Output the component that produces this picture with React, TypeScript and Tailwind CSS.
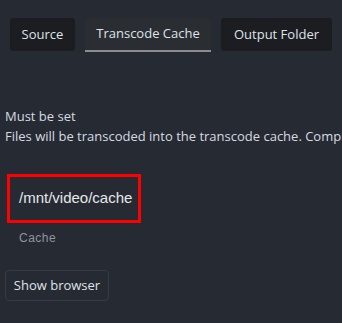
export default function App() {
  return (
    <div className="w-[342px] h-[323px] overflow-hidden bg-[#262a33] text-[#d6dae0]" style={{ fontFamily: '"Open Sans", "Noto Sans", sans-serif' }}>
      <div className="flex gap-[10px] pl-[10px] pt-[18px]">
        <button className="h-[33px] w-[65px] rounded-[3px] bg-[#1b1d21] text-[13px] text-[#dfe3e8]">Source</button>
        <button className="h-[34px] w-[126px] rounded-t-[3px] bg-[#2a2d32] text-[13px] text-[#dfe3e8] border-b-2 border-[#8a8c8e]">Transcode Cache</button>
        <button className="h-[33px] w-[111px] rounded-[3px] bg-[#1b1d21] text-[13px] text-[#dfe3e8]">Output Folder</button>
      </div>
      <div className="pl-[5px] pt-[54px] text-[13px] leading-[20px] whitespace-nowrap">
        <div>Must be set</div>
        <div>Files will be transcoded into the transcode cache. Completed files</div>
      </div>
      <div className="pl-[7px] pt-[28px]">
        <div className="w-[134px] h-[49px] border-[3px] border-[#ff0000] flex items-center pl-[9px] text-[15px] text-[#e6e8ea]" style={{ fontFamily: '"Liberation Sans", Arial, sans-serif' }}>
          /mnt/video/cache
        </div>
        <div className="pl-[12px] pt-[6px] text-[12px] tracking-[0.5px] text-[#8f949c]" style={{ fontFamily: '"Liberation Sans", Arial, sans-serif' }}>Cache</div>
      </div>
      <div className="pl-[5px] pt-[23px]">
        <button className="h-[31px] w-[104px] rounded-[4px] border border-[#363b45] text-[13px] text-[#dfe3e8]">Show browser</button>
      </div>
    </div>
  );
}
